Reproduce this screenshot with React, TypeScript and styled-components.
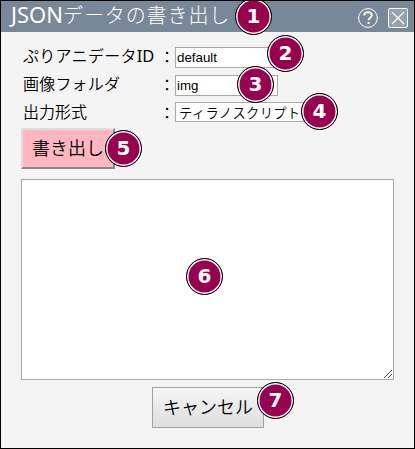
import React from 'react';
import styled, { createGlobalStyle } from 'styled-components';

const Global = createGlobalStyle`
  * { box-sizing: border-box; }
  body { margin: 0; }
`;

const Dialog = styled.main`
  width: 415px;
  height: 449px;
  border: 1px solid #000;
  background: #f4f4f4;
  color: #000;
  font-family: 'Noto Sans CJK JP', sans-serif;
  font-weight: 350;
  overflow: hidden;
`;

const TitleBar = styled.header`
  display: flex;
  align-items: center;
  height: 31px;
  padding: 0 6px 0 10px;
  background: #778899;
  color: #fff;
`;

const Anchor = styled.div`
  position: relative;
  display: flex;
`;

const Text = styled.span<{ $size: number; $spacing?: number }>`
  font-size: ${p => p.$size}px;
  line-height: 26px;
  letter-spacing: ${p => p.$spacing ?? 0}px;
  white-space: nowrap;
`;

const Latin = styled.span<{ $size: number }>`
  font-family: 'Noto Sans', sans-serif;
  font-size: ${p => p.$size}px;
  font-weight: 400;
  line-height: 1;
  letter-spacing: 0;
`;

const Title = styled.h1`
  display: flex;
  width: 220px;
  margin: 0;
  font-weight: 300;
  transform: translateY(-2px);
`;

const Tools = styled.div`
  display: flex;
  gap: 10px;
  margin-left: auto;
  padding-top: 2px;
`;

const Badge = styled.span<{ $x: number; $y: number }>`
  position: absolute;
  left: ${p => p.$x}px;
  top: ${p => p.$y}px;
  z-index: 1;
  display: flex;
  justify-content: center;
  width: 37px;
  height: 37px;
  border: 1px solid #000;
  border-radius: 50%;
  background: #99004d;
  box-shadow: inset 0 0 0 1.5px #fff;
  color: #fff;
  font: bold 20px/35px 'DejaVu Sans', sans-serif;
`;

const Form = styled.div`
  display: grid;
  grid-template-columns: 137px 16px 103px;
  grid-template-rows: 28px 28px 26px;
  padding: 12px 0 0 21px;
`;

const Label = styled.label`
  display: flex;
  padding-left: 1px;
  transform: translateY(-2px);
`;

const Colon = styled.span`
  font-size: 16px;
  line-height: 24px;
`;

const Field = styled.div<{ $top: number }>`
  position: relative;
  padding-top: ${p => p.$top}px;
`;

const Input = styled.input`
  display: block;
  width: 103px;
  height: 21px;
  border: 1px solid #a9a9a9;
  border-radius: 0;
  padding: 0 1px;
  background: #fff;
  color: #000;
  font: 13.33px 'Liberation Sans', sans-serif;
`;

const Select = styled.div`
  width: 145px;
  height: 20px;
  border: 1px solid #a9a9a9;
  background: #fff;
  padding: 2px 0 0 3px;
  display: flex;
  align-items: center;
`;

const Actions = styled.div`
  display: flex;
  padding: 2px 0 0 20px;
`;

const Button = styled.button<{ $primary?: boolean }>`
  display: flex;
  justify-content: center;
  align-items: center;
  width: ${p => (p.$primary ? 94 : 112)}px;
  height: 41px;
  padding: 0 0 4px;
  border: ${p => (p.$primary ? '2px outset #ddd' : '1px solid #a0a0a0')};
  background: ${p => (p.$primary ? '#ffb6c1' : 'linear-gradient(#f6f6f6, #dddddd)')};
  color: #000;
  font-family: inherit;
  font-weight: 350;
`;

const Output = styled.div`
  position: relative;
  width: 373px;
  height: 201px;
  margin: 10px 0 7px 20px;
`;

const TextArea = styled.textarea`
  display: block;
  width: 100%;
  height: 100%;
  border: 1px solid #a9a9a9;
  background: #fff;
  resize: none;
`;

const Grip = styled.svg`
  position: absolute;
  right: 2px;
  bottom: 2px;
`;

const Footer = styled.footer`
  display: flex;
  padding-left: 151px;
`;

export default function App() {
  return (
    <Dialog>
      <Global />
      <TitleBar>
        <Anchor>
          <Title>
            <Text $size={20} $spacing={0.9}><Latin $size={22}>JSON</Latin>データの書き出し</Text>
          </Title>
          <Badge $x={224} $y={-6}>1</Badge>
        </Anchor>
        <Tools>
          <svg width="20" height="20" viewBox="0 0 20 20" fill="none" stroke="#fff">
            <circle cx="10" cy="10" r="9.4" />
            <path d="M6.2 7.5C6.2 5.5 7.8 4.3 10 4.3s3.8 1.2 3.8 3c0 2.3-3.3 2.4-3.3 5" strokeWidth="1.9" />
            <path d="M9.5 14h2v2h-2z" fill="#fff" stroke="none" />
          </svg>
          <svg width="20" height="20" viewBox="0 0 20 20" fill="none" stroke="#fff">
            <rect x=".5" y=".5" width="19" height="19" rx="1.5" fill="#94a1af" />
            <path d="M4 4l12 12M16 4L4 16" strokeWidth="1.2" />
          </svg>
        </Tools>
      </TitleBar>
      <Form>
        <Label htmlFor="data-id">
          <Text $size={16} $spacing={0.3}>ぷりアニデータ<Latin $size={16.5}>ID</Latin></Text>
        </Label>
        <Colon>：</Colon>
        <Field $top={3}>
          <Input id="data-id" defaultValue="default" />
          <Badge $x={92} $y={-9}>2</Badge>
        </Field>
        <Label htmlFor="folder"><Text $size={16} $spacing={0.2}>画像フォルダ</Text></Label>
        <Colon>：</Colon>
        <Field $top={3}>
          <Input id="folder" defaultValue="img" />
          <Badge $x={62} $y={-6}>3</Badge>
        </Field>
        <Label><Text $size={16}>出力形式</Text></Label>
        <Colon>：</Colon>
        <Field $top={2}>
          <Select><Text $size={13.33} $spacing={0.3}>ティラノスクリプト</Text></Select>
          <Badge $x={126} $y={-7}>4</Badge>
        </Field>
      </Form>
      <Actions>
        <Anchor>
          <Button $primary><Text $size={18}>書き出し</Text></Button>
          <Badge $x={84} $y={2}>5</Badge>
        </Anchor>
      </Actions>
      <Output>
        <TextArea />
        <Grip width="8" height="8" viewBox="0 0 8 8" stroke="#555" strokeWidth="1">
          <path d="M0 8L8 0M4 8L8 4" />
        </Grip>
        <Badge $x={165} $y={79}>6</Badge>
      </Output>
      <Footer>
        <Anchor>
          <Button><Text $size={18}>キャンセル</Text></Button>
          <Badge $x={105} $y={-5}>7</Badge>
        </Anchor>
      </Footer>
    </Dialog>
  );
}
